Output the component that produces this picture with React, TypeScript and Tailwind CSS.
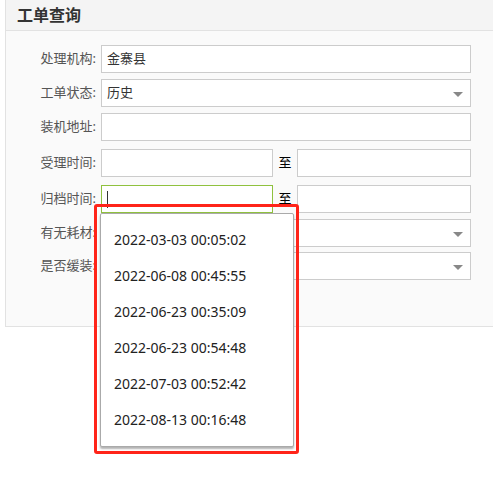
import { ReactNode } from 'react';

const font = { fontFamily: '"Noto Sans", "Noto Sans CJK SC", sans-serif' };

const archiveTimes = [
  '2022-03-03 00:05:02',
  '2022-06-08 00:45:55',
  '2022-06-23 00:35:09',
  '2022-06-23 00:54:48',
  '2022-07-03 00:52:42',
  '2022-08-13 00:16:48',
];

function Row({ label, top, children }: { label: string; top: string; children: ReactNode }) {
  return (
    <div className={`flex items-center h-[28px] ${top}`}>
      <label className="w-[91px] pr-[1px] text-right text-[13px] text-[#555] shrink-0">{label}:</label>
      <div className="ml-[4px] flex items-center">{children}</div>
    </div>
  );
}

function Arrow() {
  return (
    <span className="absolute right-[7px] top-[12px] w-0 h-0 border-l-[5px] border-r-[5px] border-t-[5px] border-l-transparent border-r-transparent border-t-[#888]" />
  );
}

function Box({ value, wide = true, select = false, focused = false }: { value?: string; wide?: boolean; select?: boolean; focused?: boolean }) {
  return (
    <div
      className={`relative h-[28px] bg-white border ${focused ? 'border-[#8fc13e]' : 'border-[#ccc]'} ${wide ? 'w-[370px]' : ''} flex items-center px-[5px] text-[13px] text-[#333]`}
    >
      {value}
      {focused && <span className="w-px h-[17px] bg-[#333]" />}
      {select && <Arrow />}
    </div>
  );
}

function Range({ focused = false }: { focused?: boolean }) {
  return (
    <>
      <div className={`w-[172px] h-[28px] bg-white border ${focused ? 'border-[#8fc13e]' : 'border-[#ccc]'} flex items-center px-[5px]`}>
        {focused && <span className="w-px h-[17px] bg-[#333]" />}
      </div>
      <span className="w-[24px] text-center text-[13px] text-black">至</span>
      <div className="w-[174px] h-[28px] bg-white border border-[#ccc]" />
    </>
  );
}

export default function App() {
  return (
    <div className="relative w-[493px] h-[483px] bg-white overflow-hidden" style={font}>
      <div className="ml-[5px] border-l border-b border-[#e2e2e2] w-[500px]">
        <div className="h-[31px] bg-[#f4f4f4] border-b border-[#e2e2e2] flex items-center pl-[11px]">
          <h1 className="text-[16px] font-bold text-[#333]">工单查询</h1>
        </div>
        <div className="relative bg-[#fafafa] h-[295px] pt-[14px]">
          <Row label="处理机构" top="">
            <Box value="金寨县" />
          </Row>
          <Row label="工单状态" top="mt-[6px]">
            <Box value="历史" select />
          </Row>
          <Row label="装机地址" top="mt-[6px]">
            <Box />
          </Row>
          <Row label="受理时间" top="mt-[8px]">
            <Range />
          </Row>
          <Row label="归档时间" top="mt-[8px]">
            <Range focused />
          </Row>
          <Row label="有无耗材" top="mt-[6px]">
            <Box select />
          </Row>
          <Row label="是否缓装" top="mt-[5px]">
            <Box select />
          </Row>
          <span className="absolute left-[487px] top-[262px] text-[9px] text-black">:</span>
        </div>
      </div>

      <div className="absolute left-[100px] top-[213px] w-[194px] h-[234px] bg-white border border-[#aaa] rounded-[2px] shadow-[0_2px_2px_rgba(0,0,0,0.3)] pt-[7px] pb-[9px]">
        {archiveTimes.map((t) => (
          <div key={t} className="h-[36px] flex items-center pl-[13px] text-[14px] text-[#222]">
            {t}
          </div>
        ))}
      </div>
      <div className="absolute left-[94px] top-[204px] w-[205px] h-[250px] border-[3px] border-[#ff2419] rounded-[3px]" />
    </div>
  );
}
